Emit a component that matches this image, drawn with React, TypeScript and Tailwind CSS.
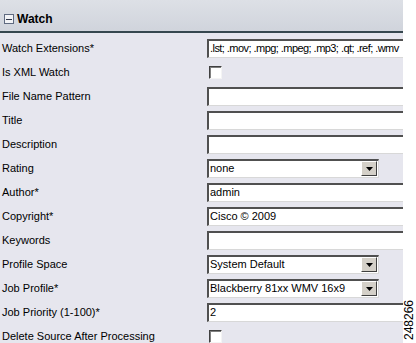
import React from "react";

type Row = {
  label: string;
  kind: "text" | "check" | "select";
  value?: string;
  tight?: boolean;
};

const rows: Row[] = [
  { label: "Watch Extensions*", kind: "text", value: ".lst; .mov; .mpg; .mpeg; .mp3; .qt; .ref; .wmv", tight: true },
  { label: "Is XML Watch", kind: "check" },
  { label: "File Name Pattern", kind: "text" },
  { label: "Title", kind: "text" },
  { label: "Description", kind: "text" },
  { label: "Rating", kind: "select", value: "none" },
  { label: "Author*", kind: "text", value: "admin" },
  { label: "Copyright*", kind: "text", value: "Cisco © 2009" },
  { label: "Keywords", kind: "text" },
  { label: "Profile Space", kind: "select", value: "System Default" },
  { label: "Job Profile*", kind: "select", value: "Blackberry 81xx WMV 16x9" },
  { label: "Job Priority (1-100)*", kind: "text", value: "2" },
  { label: "Delete Source After Processing", kind: "check" },
];

function Field({ row }: { row: Row }) {
  if (row.kind === "check") {
    return (
      <div className="h-[13px] w-[13px] border border-t-[#404040] border-l-[#404040] border-b-[#f4f4f4] border-r-[#f4f4f4] bg-white shadow-[inset_1px_1px_0_#808080]" />
    );
  }
  if (row.kind === "select") {
    return (
      <div className="flex h-[19px] w-[172px] items-center border-t-2 border-l-2 border-b border-r border-t-[#505050] border-l-[#505050] border-b-[#d8d8d8] border-r-[#d8d8d8] bg-white">
        <span className="flex-1 pl-[1px] leading-none">{row.value}</span>
        <span className="mr-[1px] flex h-[15px] w-[16px] items-center justify-center border border-t-white border-l-white border-b-[#404040] border-r-[#404040] bg-[#d4d0c8]">
          <svg width="7" height="4" viewBox="0 0 7 4">
            <path d="M0 0h7L3.5 4z" fill="#000" />
          </svg>
        </span>
      </div>
    );
  }
  return (
    <div className="flex h-[19px] w-[220px] items-center border-t-2 border-l-2 border-b border-t-[#505050] border-l-[#505050] border-b-[#d8d8d8] bg-white">
      <span className={`pl-[1px] leading-none whitespace-nowrap ${row.tight ? "tracking-[-0.55px]" : ""}`}>
        {row.value}
      </span>
    </div>
  );
}

export default function App() {
  return (
    <div className="relative h-[343px] w-[416px] overflow-hidden bg-white font-['Liberation_Sans',Arial,sans-serif] text-[11px] text-black">
      <div className="h-full w-[403px] overflow-hidden bg-[#e6e6ee]">
        <div className="flex h-[31px] items-center gap-[3px] bg-gradient-to-b from-[#dde0e6] to-[#d0d4dc] pl-[4px] pt-[7px]">
          <span className="flex h-[10px] w-[10px] items-center justify-center border border-[#5f6a80] bg-[#f2f3f6]">
            <span className="h-px w-[6px] bg-[#30384a]" />
          </span>
          <span className="text-[12px] font-bold">Watch</span>
        </div>
        <div className="h-[2px] bg-[#36474f]" />
        <div className="pt-[3px]">
          {rows.map((row) => (
            <div key={row.label} className="grid h-[24px] grid-cols-[207px_1fr] items-center">
              <span className="pl-[2px] whitespace-nowrap">{row.label}</span>
              <div className={row.kind === "check" ? "pl-[2px]" : ""}>
                <Field row={row} />
              </div>
            </div>
          ))}
        </div>
      </div>
      <span className="absolute right-[1px] bottom-[3px] rotate-180 text-[12px] leading-none [writing-mode:vertical-rl]">
        248266
      </span>
    </div>
  );
}
